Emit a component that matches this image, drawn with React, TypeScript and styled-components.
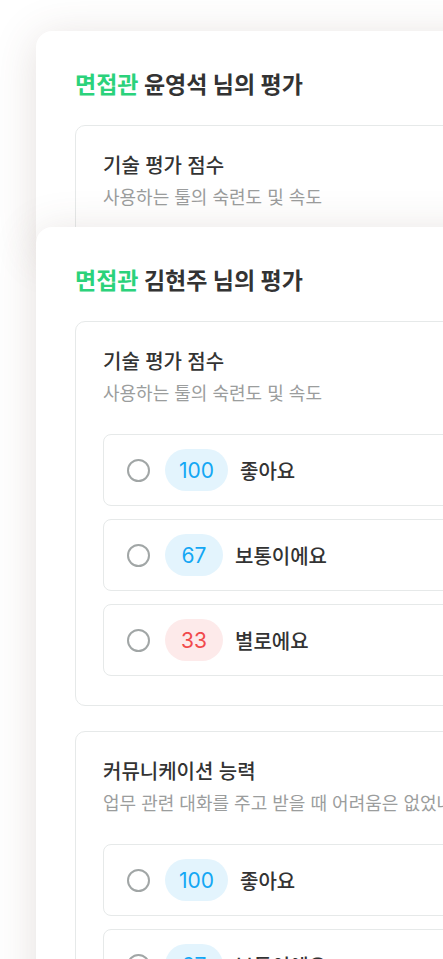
import React from "react";
import styled, { createGlobalStyle } from "styled-components";

const COLORS = {
  text: "#333333",
  sub: "#9b9d9d",
  green: "#2bd27b",
  line: "#e6e9e9",
  blue: "#14a7f4",
  blueBg: "#e3f4fd",
  red: "#f14a4c",
  redBg: "#fdeaea",
  radio: "#a1a6a6",
};

const GlobalStyle = createGlobalStyle`
  html, body {
    margin: 0;
    padding: 0;
    background-color: #ffffff;
    overflow: hidden;
  }

  body {
    font-family: "Inter", "Noto Sans CJK KR", sans-serif;
    color: ${COLORS.text};
  }
`;

const Page = styled.div`
  padding: 31px 0 0 36px;
  display: flex;
  flex-direction: column;
`;

const Card = styled.div<{ $clip?: boolean }>`
  position: relative;
  width: 520px;
  box-sizing: border-box;
  background-color: white;
  border-radius: 16px;
  box-shadow: 0 6px 44px rgba(95, 65, 55, 0.17);
  padding: 39px 0 40px 39px;
  display: flex;
  flex-direction: column;
  gap: 25px;
  height: ${({ $clip }) => ($clip ? "220px" : "auto")};
  overflow: hidden;

  & + & {
    margin-top: -24px;
  }
`;

const Title = styled.h2`
  margin: 0;
  font-size: 23px;
  line-height: 30px;
  font-weight: 700;
  color: ${COLORS.text};
  white-space: nowrap;

  span {
    color: ${COLORS.green};
  }
`;

const Section = styled.div`
  border: 1px solid ${COLORS.line};
  border-radius: 10px;
  padding: 27px 0 29px 27px;
  display: flex;
  flex-direction: column;
`;

const SectionTitle = styled.div`
  font-size: 20px;
  line-height: 26px;
  font-weight: 500;
  color: ${COLORS.text};
  white-space: nowrap;
`;

const SectionDesc = styled.div`
  margin-top: 7px;
  font-size: 18px;
  line-height: 24px;
  color: ${COLORS.sub};
  white-space: nowrap;
`;

const Options = styled.div`
  margin-top: 28px;
  display: flex;
  flex-direction: column;
  gap: 13px;
`;

const Option = styled.label`
  height: 72px;
  box-sizing: border-box;
  border: 1px solid ${COLORS.line};
  border-radius: 8px;
  padding-left: 23px;
  display: flex;
  align-items: center;
`;

const Radio = styled.span`
  width: 23px;
  height: 23px;
  box-sizing: border-box;
  border: 2px solid ${COLORS.radio};
  border-radius: 50%;
  flex-shrink: 0;
`;

const Badge = styled.span<{ $bad?: boolean }>`
  margin-left: 15px;
  min-width: 58px;
  box-sizing: border-box;
  height: 42px;
  padding: 0 14px;
  border-radius: 21px;
  display: inline-flex;
  align-items: center;
  justify-content: center;
  font-family: "Inter", sans-serif;
  font-size: 21px;
  color: ${({ $bad }) => ($bad ? COLORS.red : COLORS.blue)};
  background-color: ${({ $bad }) => ($bad ? COLORS.redBg : COLORS.blueBg)};
`;

const Label = styled.span`
  margin-left: 12px;
  font-size: 20px;
  font-weight: 500;
  color: ${COLORS.text};
`;

const choices = [
  { score: 100, label: "좋아요" },
  { score: 67, label: "보통이에요" },
  { score: 33, label: "별로에요" },
];

const Question: React.FC<{ title: string; desc: string }> = ({ title, desc }) => (
  <Section>
    <SectionTitle>{title}</SectionTitle>
    <SectionDesc>{desc}</SectionDesc>
    <Options>
      {choices.map((c) => (
        <Option key={c.score}>
          <Radio />
          <Badge $bad={c.score < 50}>{c.score}</Badge>
          <Label>{c.label}</Label>
        </Option>
      ))}
    </Options>
  </Section>
);

const App: React.FC = () => {
  return (
    <>
      <GlobalStyle />
      <Page>
        <Card $clip>
          <Title>
            <span>면접관</span> 윤영석 님의 평가
          </Title>
          <Question title="기술 평가 점수" desc="사용하는 툴의 숙련도 및 속도" />
        </Card>
        <Card>
          <Title>
            <span>면접관</span> 김현주 님의 평가
          </Title>
          <Question title="기술 평가 점수" desc="사용하는 툴의 숙련도 및 속도" />
          <Question
            title="커뮤니케이션 능력"
            desc="업무 관련 대화를 주고 받을 때 어려움은 없었나요?"
          />
        </Card>
      </Page>
    </>
  );
};

export default App;
